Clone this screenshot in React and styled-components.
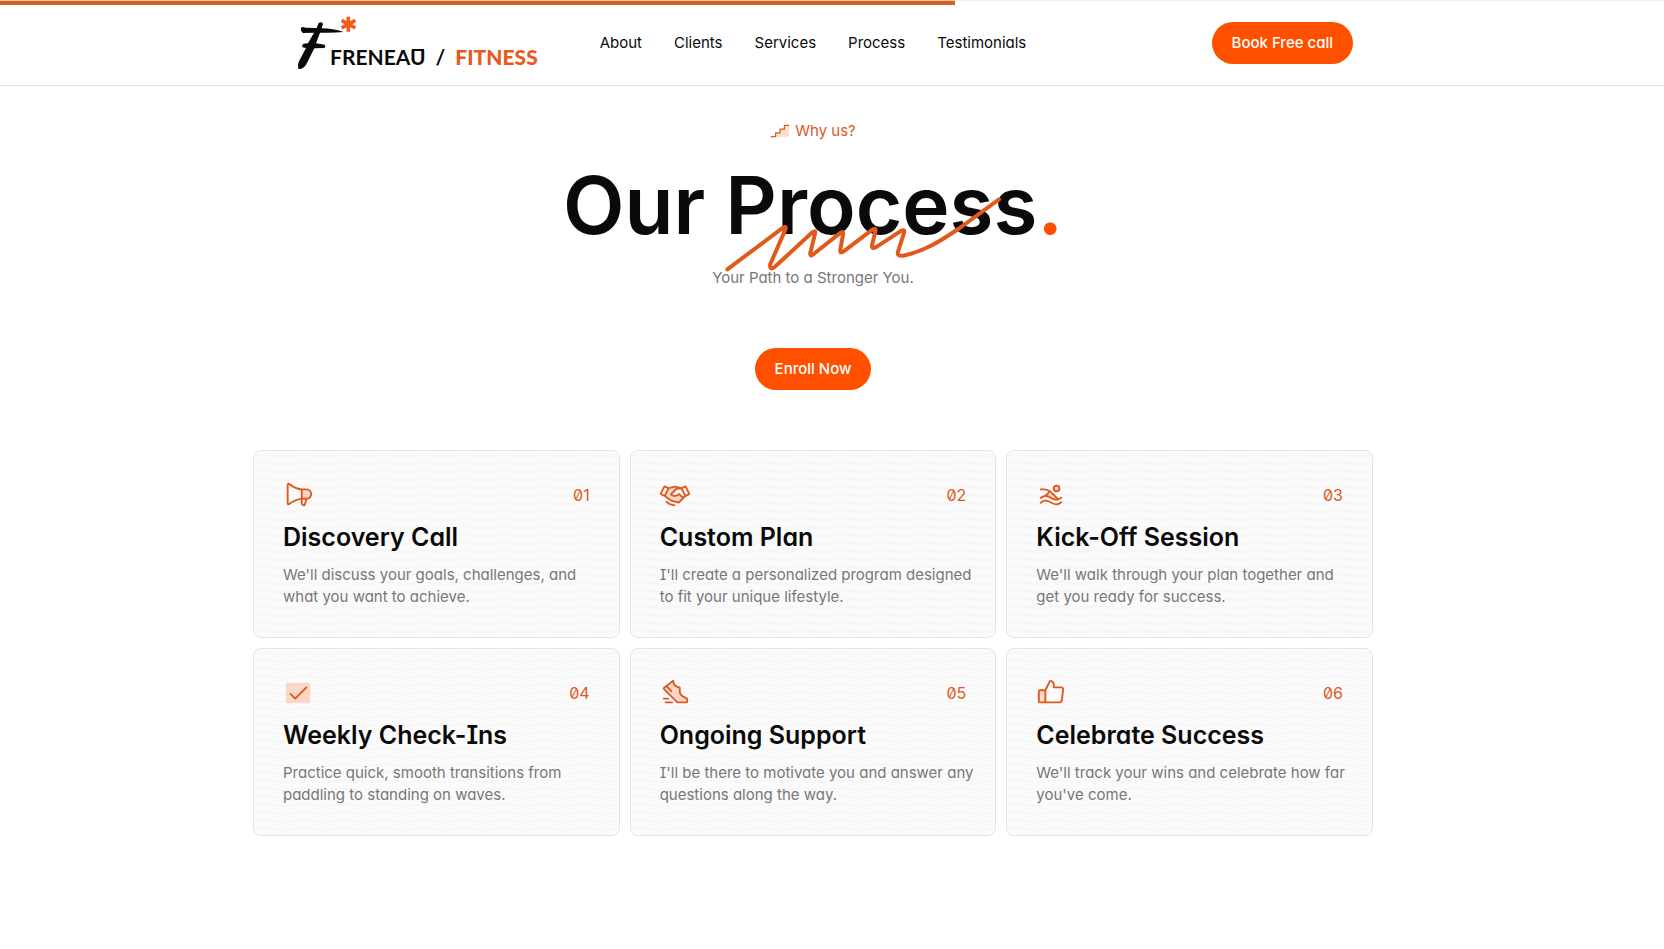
import React from "react";
import styled, { createGlobalStyle } from "styled-components";
import {
  PiMegaphoneDuotone,
  PiHandshakeDuotone,
  PiPersonSimpleSwimDuotone,
  PiCheckDuotone,
  PiSneakerMoveDuotone,
  PiThumbsUpDuotone,
  PiStepsDuotone,
} from "react-icons/pi";

const GlobalStyle = createGlobalStyle`
  *, *::before, *::after { box-sizing: border-box; }
  body {
    margin: 0;
    background: #fff;
    color: #0a0a0a;
    font-family: Inter, "Liberation Sans", sans-serif;
    font-size: 15px;
    line-height: 22px;
    font-feature-settings: "cv11", "cv08", "zero";
  }
  h1, h2, p { margin: 0; }
  svg [opacity="0.2"] { fill: #ff5000; }
`;

const Header = styled.header`
  position: relative;
  border-top: 1px solid #f0f0f0;
  border-bottom: 1px solid #e2e2e2;
  padding: 0 38px 0 0;
`;

const Progress = styled.div`
  position: absolute;
  top: -1px;
  left: 0;
  width: 57.4%;
  height: 5px;
  background: #d15f27;
  border-top: 1px solid #f6c9a0;
`;

const HeaderInner = styled.div`
  max-width: 1120px;
  min-height: 84px;
  margin: 0 auto;
  padding: 0 20px;
  display: grid;
  grid-template-columns: 1fr auto 1fr;
  align-items: center;
`;

const Logo = styled.a`
  display: flex;
  align-items: flex-end;
  padding-left: 24px;
  color: #0a0a0a;
  text-decoration: none;
`;

const LogoMark = styled.svg`
  width: 60px;
  height: 56px;
  margin-right: -27px;
  flex: none;
`;

const LogoText = styled.span`
  display: flex;
  gap: 10px;
  padding-bottom: 2px;
  font-family: Lato, sans-serif;
  font-size: 21px;
  line-height: 24px;
  font-weight: 700;
`;

const ClosedU = styled.span`
  background: linear-gradient(#0a0a0a, #0a0a0a) 2px 5px / 12px 2px no-repeat;
`;

const Accent = styled.span`
  color: #e85a1c;
  font-weight: 900;
`;

const Nav = styled.nav`
  display: flex;
  gap: 32px;
`;

const NavLink = styled.a`
  color: #0a0a0a;
  text-decoration: none;
`;

const Button = styled.button`
  justify-self: end;
  height: 42px;
  padding: 0 20px;
  border: 0;
  border-radius: 21px;
  background: #ff5000;
  color: #fff;
  font: inherit;
  font-weight: 500;
  font-feature-settings: inherit;
  cursor: pointer;
`;

const Main = styled.main`
  padding: 34px 38px 112px 0;
`;

const Hero = styled.section`
  display: flex;
  flex-direction: column;
  align-items: center;
  text-align: center;
`;

const Eyebrow = styled.p`
  display: flex;
  align-items: center;
  gap: 5px;
  color: #dc5a22;
`;

const Title = styled.h1`
  position: relative;
  margin-top: 15px;
  font-size: 80px;
  line-height: 96px;
  font-weight: 600;
`;

const Dot = styled.span`
  color: #ff5000;
`;

const Scribble = styled.svg`
  position: absolute;
  left: calc(50% - 90px);
  bottom: -20px;
  width: 281px;
  height: 78px;
`;

const Subtitle = styled.p`
  margin: 14px 0 59px;
  color: #777;
`;

const Grid = styled.section`
  max-width: 1120px;
  margin: 60px auto 0;
  display: grid;
  grid-template-columns: repeat(3, 1fr);
  gap: 10px;
`;

const Card = styled.article`
  position: relative;
  overflow: hidden;
  padding: 29px 19px 29px 29px;
  border: 1px solid #e4e4e4;
  border-radius: 8px;
  background: #fbfbfb;
`;

const Waves = styled.svg`
  position: absolute;
  inset: 0;
  width: 100%;
  height: 100%;
`;

const CardBody = styled.div`
  position: relative;
`;

const CardTop = styled.div`
  display: flex;
  align-items: center;
  justify-content: space-between;
  padding-right: 10px;
  font-size: 16px;
  color: #dc5a22;
`;

const CardTitle = styled.h2`
  margin: 10px 0;
  font-size: 25px;
  line-height: 34px;
  font-weight: 600;
`;

const CardText = styled.p`
  color: #777;
`;

const links = ["About", "Clients", "Services", "Process", "Testimonials"];

const steps = [
  { icon: PiMegaphoneDuotone, title: "Discovery Call", text: "We'll discuss your goals, challenges, and what you want to achieve." },
  { icon: PiHandshakeDuotone, title: "Custom Plan", text: "I'll create a personalized program designed to fit your unique lifestyle." },
  { icon: PiPersonSimpleSwimDuotone, title: "Kick-Off Session", text: "We'll walk through your plan together and get you ready for success." },
  { icon: PiCheckDuotone, title: "Weekly Check-Ins", text: "Practice quick, smooth transitions from paddling to standing on waves." },
  { icon: PiSneakerMoveDuotone, title: "Ongoing Support", text: "I'll be there to motivate you and answer any questions along the way." },
  { icon: PiThumbsUpDuotone, title: "Celebrate Success", text: "We'll track your wins and celebrate how far you've come." },
];

function Step({ step, index }) {
  const Icon = step.icon;
  const id = `waves-${index}`;
  return (
    <Card>
      <Waves aria-hidden="true">
        <defs>
          <pattern id={id} width="40" height="8" patternUnits="userSpaceOnUse">
            <path d="M0 4C8 4 12 2 20 4S32 6 40 4" fill="none" stroke="#f7f7f7" strokeWidth="2" />
          </pattern>
        </defs>
        <rect width="100%" height="100%" fill={`url(#${id})`} />
      </Waves>
      <CardBody>
        <CardTop>
          <Icon size={30} aria-hidden="true" />
          <span>{`0${index + 1}`}</span>
        </CardTop>
        <CardTitle>{step.title}</CardTitle>
        <CardText>{step.text}</CardText>
      </CardBody>
    </Card>
  );
}

export default function App() {
  return (
    <>
      <GlobalStyle />
      <Header>
        <Progress />
        <HeaderInner>
          <Logo href="#home">
            <LogoMark viewBox="50 44 180 168" aria-hidden="true">
              <path
                fill="#0a0a0a"
                d="M62 82 Q66 78 76 82 L109 83 L115 68 Q122 63 128 70 L124 84 Q158 84 190 95 Q160 98 119 97 L107 129 L133 133 Q138 138 132 143 L102 144 L78 192 Q70 207 54 206 Q51 190 58 179 L77 143 L66 141 Q64 135 69 130 L83 129 L101 97 L68 98 Q60 92 62 82Z"
              />
              <g stroke="#f4581a" strokeWidth="11">
                <path d="M204 49V94M184 60L225 83M184 83L225 60" />
              </g>
            </LogoMark>
            <LogoText>
              <span>FRENEA<ClosedU>U</ClosedU></span>
              <span>/</span>
              <Accent>FITNESS</Accent>
            </LogoText>
          </Logo>
          <Nav aria-label="Main">
            {links.map((l) => (
              <NavLink key={l} href={`#${l.toLowerCase()}`}>{l}</NavLink>
            ))}
          </Nav>
          <Button type="button">Book Free call</Button>
        </HeaderInner>
      </Header>
      <Main>
        <Hero>
          <Eyebrow>
            <PiStepsDuotone size={20} aria-hidden="true" />
            Why us?
          </Eyebrow>
          <Title>
            Our Process<Dot>.</Dot>
            <Scribble viewBox="460 285 843 234" aria-hidden="true">
              <path
                d="M473 508L636 386Q652 374 647 389L602 492Q598 512 614 502L728 397Q740 388 736 401L722 458Q720 473 732 462L810 400Q823 391 820 404L812 448Q810 462 822 454L905 391Q921 380 917 395L907 435Q905 448 918 442L992 394Q1007 386 1003 399L985 455Q981 469 1000 467C1060 456 1110 425 1170 384L1288 298"
                fill="none"
                stroke="#e2591c"
                strokeWidth="12"
                strokeLinecap="round"
                strokeLinejoin="round"
              />
            </Scribble>
          </Title>
          <Subtitle>Your Path to a Stronger You.</Subtitle>
          <Button type="button">Enroll Now</Button>
        </Hero>
        <Grid aria-label="Process steps">
          {steps.map((s, i) => (
            <Step key={s.title} step={s} index={i} />
          ))}
        </Grid>
      </Main>
    </>
  );
}
